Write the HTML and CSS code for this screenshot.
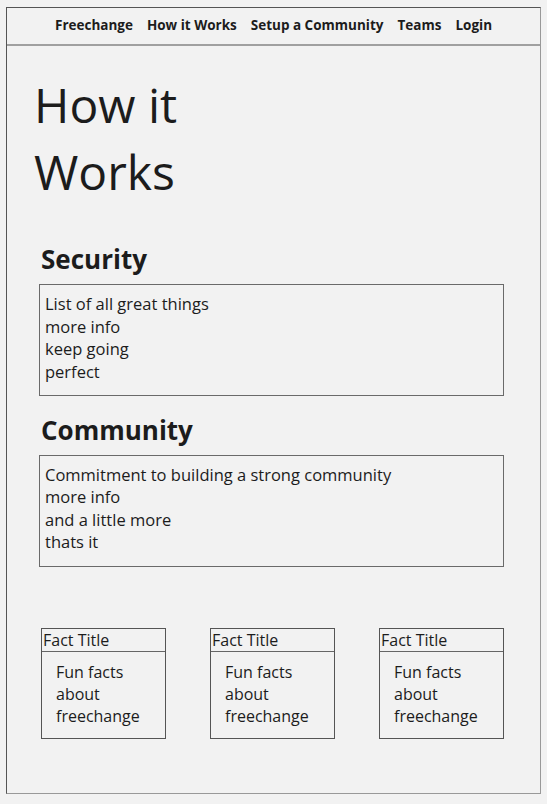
FILE: index.html
```html
<!DOCTYPE html>
<html>
<head>
<meta charset="utf-8">
<link rel="stylesheet" href="styles.css">
</head>
<body>
<div class="frame">
  <nav class="nav">
    <a class="nav-link">Freechange</a>
    <a class="nav-link">How it Works</a>
    <a class="nav-link">Setup a Community</a>
    <a class="nav-link">Teams</a>
    <a class="nav-link">Login</a>
  </nav>
  <main class="content">
    <h1 class="title">How it Works</h1>
    <section class="section">
      <h2 class="section-title">Security</h2>
      <div class="info-box">
        <div>List of all great things</div>
        <div>more info</div>
        <div>keep going</div>
        <div>perfect</div>
      </div>
    </section>
    <section class="section">
      <h2 class="section-title">Community</h2>
      <div class="info-box">
        <div>Commitment to building a strong community</div>
        <div>more info</div>
        <div>and a little more</div>
        <div>thats it</div>
      </div>
    </section>
    <div class="facts">
      <div class="fact">
        <div class="fact-title">Fact Title</div>
        <div class="fact-body">Fun facts about freechange</div>
      </div>
      <div class="fact">
        <div class="fact-title">Fact Title</div>
        <div class="fact-body">Fun facts about freechange</div>
      </div>
      <div class="fact">
        <div class="fact-title">Fact Title</div>
        <div class="fact-body">Fun facts about freechange</div>
      </div>
    </div>
  </main>
</div>
</body>
</html>
```
FILE: styles.css
```css
html, body {
  margin: 0;
  padding: 0;
  background: #f2f2f2;
}
body {
  font-family: "Open Sans", sans-serif;
  color: #1c1c1c;
}
.frame {
  margin: 7px 6px 0 6px;
  height: 785px;
  border-style: solid;
  border-width: 1px;
  border-color: #555 #999 #999 #555;
  box-sizing: content-box;
}
.nav {
  display: flex;
  justify-content: center;
  gap: 14px;
  height: 38px;
  align-items: center;
  border-bottom: 2px solid #a0a0a0;
  box-sizing: border-box;
  padding-bottom: 2px;
}
.nav-link {
  font-weight: 700;
  font-size: 13.5px;
  color: #1c1c1c;
}
.content {
  padding: 25px 36px 0 26px;
}
.title {
  margin: 0;
  width: 200px;
  font-size: 48px;
  font-weight: 400;
  line-height: 1.4;
  padding-left: 1px;
}
.section {
  margin-top: 36px;
}
.section + .section {
  margin-top: 16px;
}
.section-title {
  margin: 0 0 7px 8px;
  font-size: 26px;
  font-weight: 700;
  line-height: 36px;
}
.info-box {
  border: 1px solid #6a6a6a;
  padding: 8px 5px 12px;
  font-size: 16.5px;
  line-height: 22.4px;
  margin-left: 6px;
}
.facts {
  display: flex;
  justify-content: space-between;
  margin-top: 61px;
  margin-left: 8px;
}
.fact {
  width: 125px;
  border: 1px solid #555;
  box-sizing: border-box;
}
.fact-title {
  font-size: 16px;
  line-height: 22px;
  padding-left: 1px;
  border-bottom: 1px solid #666;
}
.fact-body {
  font-size: 16px;
  line-height: 22.4px;
  padding: 9px 10px 10px 14px;
}
```
